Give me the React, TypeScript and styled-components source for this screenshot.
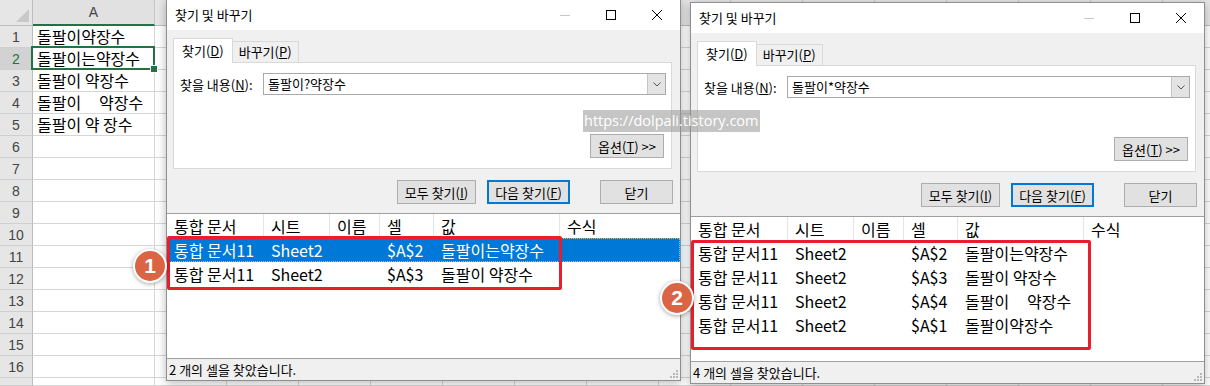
import React from "react";
import styled, { createGlobalStyle } from "styled-components";

const GlobalStyle = createGlobalStyle`
  html, body {
    margin: 0;
    padding: 0;
  }
  body {
    width: 1210px;
    height: 386px;
    overflow: hidden;
    background: #ffffff;
    font-family: "Noto Sans CJK KR", "Noto Sans", sans-serif;
  }
`;

const KR = `"Noto Sans CJK KR", "Noto Sans", sans-serif`;

// ---------- Excel sheet behind the dialogs ----------

const Sheet = styled.div`
  position: relative;
  width: 1210px;
  height: 386px;
  overflow: hidden;
  display: grid;
  grid-template-columns: 33px 122px repeat(15, 72px);
  grid-template-rows: 26px repeat(16, 22px) 8px;
`;

const Corner = styled.div`
  box-sizing: border-box;
  background: #e6e6e6;
  border-right: 1px solid #bdbdbd;
  border-bottom: 1px solid #bdbdbd;
  display: flex;
  align-items: flex-end;
  justify-content: flex-end;
  padding: 0 3px 3px 0;
`;

const CornerMark = styled.div`
  width: 0;
  height: 0;
  border-left: 13px solid transparent;
  border-bottom: 13px solid #c9c9c9;
`;

const ColHead = styled.div<{ $active?: boolean }>`
  box-sizing: border-box;
  background: ${(p) => (p.$active ? "#e1e1e1" : "#e6e6e6")};
  border-right: 1px solid #c6c6c6;
  border-bottom: ${(p) => (p.$active ? "2px solid #217346" : "1px solid #bdbdbd")};
  color: #444;
  font-family: "Liberation Sans", Arial, sans-serif;
  font-size: 14px;
  display: flex;
  align-items: center;
  justify-content: center;
`;

const RowHead = styled.div<{ $active?: boolean }>`
  box-sizing: border-box;
  background: ${(p) => (p.$active ? "#d2d2d2" : "#e6e6e6")};
  border-right: 1px solid #bdbdbd;
  border-bottom: 1px solid #cfcfcf;
  color: ${(p) => (p.$active ? "#217346" : "#444")};
  font-family: "Liberation Sans", Arial, sans-serif;
  font-size: 14px;
  display: flex;
  align-items: center;
  justify-content: center;
  overflow: hidden;
`;

const Cell = styled.div<{ $selected?: boolean }>`
  position: relative;
  box-sizing: border-box;
  border-right: 1px solid #d6d6d6;
  border-bottom: 1px solid #d6d6d6;
  padding-left: 4px;
  font-family: ${KR};
  font-size: 16px;
  line-height: 21px;
  color: #000;
  white-space: pre;
  overflow: visible;

  ${(p) =>
    p.$selected &&
    `
    &::after {
      content: "";
      position: absolute;
      left: -2px;
      top: -2px;
      right: -1px;
      bottom: -1px;
      border: 2px solid #217346;
    }
    &::before {
      content: "";
      position: absolute;
      right: -4px;
      bottom: -4px;
      width: 6px;
      height: 6px;
      background: #217346;
      border: 1px solid #fff;
      z-index: 1;
    }
  `}
`;

const COLS = ["A", "B", "C", "D", "E", "F", "G", "H", "I", "J", "K", "L", "M", "N", "O", "P"];
const SPACED = "돌팔이     약장수";
const CELL_TEXT: Record<number, string> = {
  1: "돌팔이약장수",
  2: "돌팔이는약장수",
  3: "돌팔이 약장수",
  4: SPACED,
  5: "돌팔이 약 장수",
};

// ---------- Find & Replace dialog ----------

const Window = styled.div<{ $left: number; $top: number }>`
  position: absolute;
  left: ${(p) => p.$left}px;
  top: ${(p) => p.$top}px;
  width: 515px;
  height: 382px;
  box-sizing: border-box;
  border: 1px solid #8f8f8f;
  background: #f0f0f0;
  box-shadow: 0 2px 9px rgba(0, 0, 0, 0.28);
  display: flex;
  flex-direction: column;
  font-family: ${KR};
  font-size: 13px;
  color: #000;
  z-index: 2;
`;

const TitleBar = styled.div`
  height: 30px;
  flex: none;
  background: #ffffff;
  display: flex;
  align-items: center;
  padding-left: 8px;
`;

const Title = styled.span`
  flex: 1;
  line-height: 18px;
`;

const Controls = styled.div`
  display: flex;
  height: 30px;
`;

const ControlButton = styled.div`
  width: 46px;
  height: 30px;
  display: flex;
  align-items: center;
  justify-content: center;
`;

const Body = styled.div`
  flex: 1;
  display: flex;
  flex-direction: column;
  padding-top: 8px;
  min-height: 0;
`;

const TabRow = styled.div`
  display: flex;
  align-items: flex-end;
  height: 25px;
  margin-left: 6px;
  margin-bottom: -1px;
  position: relative;
  z-index: 1;
`;

const Tab = styled.div<{ $active?: boolean }>`
  box-sizing: border-box;
  height: ${(p) => (p.$active ? "25px" : "22px")};
  line-height: ${(p) => (p.$active ? "23px" : "20px")};
  padding: ${(p) => (p.$active ? "0 8px" : "0 6px")};
  background: ${(p) => (p.$active ? "#ffffff" : "#f0f0f0")};
  border: 1px solid #d9d9d9;
  border-bottom: ${(p) => (p.$active ? "none" : "1px solid #d9d9d9")};
  border-left: ${(p) => (p.$active ? "1px solid #d9d9d9" : "none")};
`;

const Panel = styled.div`
  box-sizing: border-box;
  height: 107px;
  margin: 0 8px 0 6px;
  background: #ffffff;
  border: 1px solid #d9d9d9;
  padding: 10px 5px 10px 6px;
  display: flex;
  flex-direction: column;
  justify-content: space-between;
`;

const FindRow = styled.div`
  display: flex;
  align-items: center;
  height: 22px;
`;

const Label = styled.span`
  width: 83px;
  flex: none;
  white-space: nowrap;
`;

const Combo = styled.div`
  flex: 1;
  height: 22px;
  box-sizing: border-box;
  border: 1px solid #a9a9a9;
  display: flex;
  align-items: stretch;
`;

const ComboText = styled.span`
  flex: 1;
  padding-left: 4px;
  line-height: 20px;
`;

const DropButton = styled.div`
  width: 17px;
  background: #e3e3e3;
  border-left: 1px solid #c4c4c4;
  display: flex;
  align-items: center;
  justify-content: center;
`;

const OptionsRow = styled.div`
  display: flex;
  justify-content: flex-end;
  padding-right: 2px;
`;

const Button = styled.div<{ $w: number; $default?: boolean }>`
  box-sizing: border-box;
  width: ${(p) => p.$w}px;
  height: 24px;
  background: #e1e1e1;
  border: ${(p) => (p.$default ? "2px solid #0078d7" : "1px solid #adadad")};
  display: flex;
  align-items: center;
  justify-content: center;
  white-space: pre;
`;

const ButtonRow = styled.div`
  display: flex;
  justify-content: flex-end;
  align-items: center;
  margin-top: 11px;
  padding-right: 7px;
  gap: 11px;
`;

const CloseSpacer = styled.div`
  width: 8px;
`;

const ListBox = styled.div`
  position: relative;
  flex: 1;
  margin-top: 9px;
  background: #ffffff;
  border-top: 1px solid #a0a0a0;
  display: flex;
  flex-direction: column;
  font-size: 16px;
  min-height: 0;
`;

const ListRow = styled.div<{ $selected?: boolean }>`
  display: flex;
  height: 24px;
  flex: none;
  line-height: 24px;
  background: ${(p) => (p.$selected ? "#0078d7" : "transparent")};
  color: ${(p) => (p.$selected ? "#ffffff" : "#000")};
  outline: ${(p) => (p.$selected ? "1px dotted #f1b55c" : "none")};
  outline-offset: -1px;
`;

const ListCell = styled.div<{ $w?: number; $head?: boolean }>`
  box-sizing: border-box;
  ${(p) => (p.$w ? `width: ${p.$w}px; flex: none;` : "flex: 1;")}
  padding-left: 7px;
  white-space: pre;
  overflow: hidden;
  border-right: ${(p) => (p.$head && p.$w ? "1px solid #e5e5e5" : "none")};
`;

const RedBox = styled.div<{ $top: number; $w: number; $h: number }>`
  position: absolute;
  left: 0;
  top: ${(p) => p.$top}px;
  width: ${(p) => p.$w}px;
  height: ${(p) => p.$h}px;
  box-sizing: border-box;
  border: 3px solid #ea1d2c;
  border-radius: 2px;
  z-index: 2;
  pointer-events: none;
`;

const StatusBar = styled.div`
  position: relative;
  height: 21px;
  flex: none;
  border-top: 1px solid #a0a0a0;
  background: #f0f0f0;
  padding-left: 2px;
  line-height: 21px;
  font-size: 13px;
`;

const Grip = styled.svg`
  position: absolute;
  right: 1px;
  bottom: 1px;
`;

// ---------- overlays ----------

const Badge = styled.div<{ $x: number; $y: number }>`
  position: absolute;
  left: ${(p) => p.$x - 17}px;
  top: ${(p) => p.$y - 17}px;
  width: 30px;
  height: 30px;
  border-radius: 50%;
  background: #da6443;
  border: 2px solid #ffffff;
  box-shadow: 0 1px 4px rgba(0, 0, 0, 0.35);
  color: #ffffff;
  font-family: "Liberation Sans", Arial, sans-serif;
  font-weight: bold;
  font-size: 21px;
  display: flex;
  align-items: center;
  justify-content: center;
  z-index: 5;
`;

const Watermark = styled.div`
  position: absolute;
  left: 583px;
  top: 110px;
  height: 22px;
  padding: 0 1px;
  background: rgba(150, 150, 150, 0.55);
  color: #ffffff;
  font-family: "Open Sans", "Liberation Sans", sans-serif;
  font-size: 14.5px;
  line-height: 22px;
  white-space: nowrap;
  z-index: 6;
`;

type Result = { book: string; sheet: string; cell: string; value: string };

const WIDTHS = [97, 66, 50, 54, 126];

function Dialog(props: {
  left: number;
  top: number;
  query: string;
  results: Result[];
  selected?: number;
  box: { top: number; w: number; h: number };
}) {
  const { left, top, query, results, selected, box } = props;
  return (
    <Window $left={left} $top={top}>
      <TitleBar>
        <Title>찾기 및 바꾸기</Title>
        <Controls>
          <ControlButton>
            <svg width="10" height="10">
              <line x1="0" y1="5.5" x2="10" y2="5.5" stroke="#c8c8c8" />
            </svg>
          </ControlButton>
          <ControlButton>
            <svg width="10" height="10">
              <rect x="0.5" y="0.5" width="9" height="9" fill="none" stroke="#000" />
            </svg>
          </ControlButton>
          <ControlButton>
            <svg width="10" height="10">
              <path d="M0 0 L10 10 M10 0 L0 10" stroke="#000" strokeWidth="1" />
            </svg>
          </ControlButton>
        </Controls>
      </TitleBar>
      <Body>
        <TabRow>
          <Tab $active>
            찾기(<u>D</u>)
          </Tab>
          <Tab>
            바꾸기(<u>P</u>)
          </Tab>
        </TabRow>
        <Panel>
          <FindRow>
            <Label>
              찾을 내용(<u>N</u>):
            </Label>
            <Combo>
              <ComboText>{query}</ComboText>
              <DropButton>
                <svg width="8" height="5">
                  <path d="M0.5 0.5 L4 4 L7.5 0.5" fill="none" stroke="#555" />
                </svg>
              </DropButton>
            </Combo>
          </FindRow>
          <OptionsRow>
            <Button $w={74}>
              옵션(<u>T</u>) {">>"}
            </Button>
          </OptionsRow>
        </Panel>
        <ButtonRow>
          <Button $w={79}>
            모두 찾기(<u>I</u>)
          </Button>
          <Button $w={83} $default>
            다음 찾기(<u>F</u>)
          </Button>
          <CloseSpacer />
          <Button $w={73}>닫기</Button>
        </ButtonRow>
        <ListBox>
          <ListRow>
            {["통합 문서", "시트", "이름", "셀", "값"].map((h, i) => (
              <ListCell key={h} $w={WIDTHS[i]} $head>
                {h}
              </ListCell>
            ))}
            <ListCell $head>수식</ListCell>
          </ListRow>
          {results.map((r, i) => (
            <ListRow key={r.cell} $selected={selected === i}>
              <ListCell $w={WIDTHS[0]}>{r.book}</ListCell>
              <ListCell $w={WIDTHS[1]}>{r.sheet}</ListCell>
              <ListCell $w={WIDTHS[2]} />
              <ListCell $w={WIDTHS[3]}>{r.cell}</ListCell>
              <ListCell $w={WIDTHS[4]}>{r.value}</ListCell>
              <ListCell />
            </ListRow>
          ))}
          <RedBox $top={box.top} $w={box.w} $h={box.h} />
        </ListBox>
        <StatusBar>
          {results.length} 개의 셀을 찾았습니다.
          <Grip width="10" height="10">
            {[
              [7, 1],
              [4, 4],
              [7, 4],
              [1, 7],
              [4, 7],
              [7, 7],
            ].map(([x, y]) => (
              <rect key={`${x}-${y}`} x={x} y={y} width="2" height="2" fill="#b8b8b8" />
            ))}
          </Grip>
        </StatusBar>
      </Body>
    </Window>
  );
}

const firstResults: Result[] = [
  { book: "통합 문서11", sheet: "Sheet2", cell: "$A$2", value: "돌팔이는약장수" },
  { book: "통합 문서11", sheet: "Sheet2", cell: "$A$3", value: "돌팔이 약장수" },
];

const secondResults: Result[] = [
  { book: "통합 문서11", sheet: "Sheet2", cell: "$A$2", value: "돌팔이는약장수" },
  { book: "통합 문서11", sheet: "Sheet2", cell: "$A$3", value: "돌팔이 약장수" },
  { book: "통합 문서11", sheet: "Sheet2", cell: "$A$4", value: SPACED },
  { book: "통합 문서11", sheet: "Sheet2", cell: "$A$1", value: "돌팔이약장수" },
];

export default function App() {
  const rows = Array.from({ length: 17 }, (_, i) => i + 1);
  return (
    <>
      <GlobalStyle />
      <Sheet>
        <Corner>
          <CornerMark />
        </Corner>
        {COLS.map((c) => (
          <ColHead key={c} $active={c === "A"}>
            {c}
          </ColHead>
        ))}
        {rows.map((r) => (
          <React.Fragment key={r}>
            <RowHead $active={r === 2}>{r < 17 ? r : ""}</RowHead>
            {COLS.map((c) => (
              <Cell key={c} $selected={c === "A" && r === 2}>
                {c === "A" ? CELL_TEXT[r] ?? "" : ""}
              </Cell>
            ))}
          </React.Fragment>
        ))}

        <Dialog
          left={166}
          top={-1}
          query="돌팔이?약장수"
          results={firstResults}
          selected={0}
          box={{ top: 22, w: 395, h: 54 }}
        />
        <Dialog
          left={690}
          top={2}
          query="돌팔이*약장수"
          results={secondResults}
          box={{ top: 23, w: 400, h: 110 }}
        />

        <Watermark>https://dolpali.tistory.com</Watermark>
        <Badge $x={150} $y={266}>1</Badge>
        <Badge $x={677} $y={298}>2</Badge>
      </Sheet>
    </>
  );
}
